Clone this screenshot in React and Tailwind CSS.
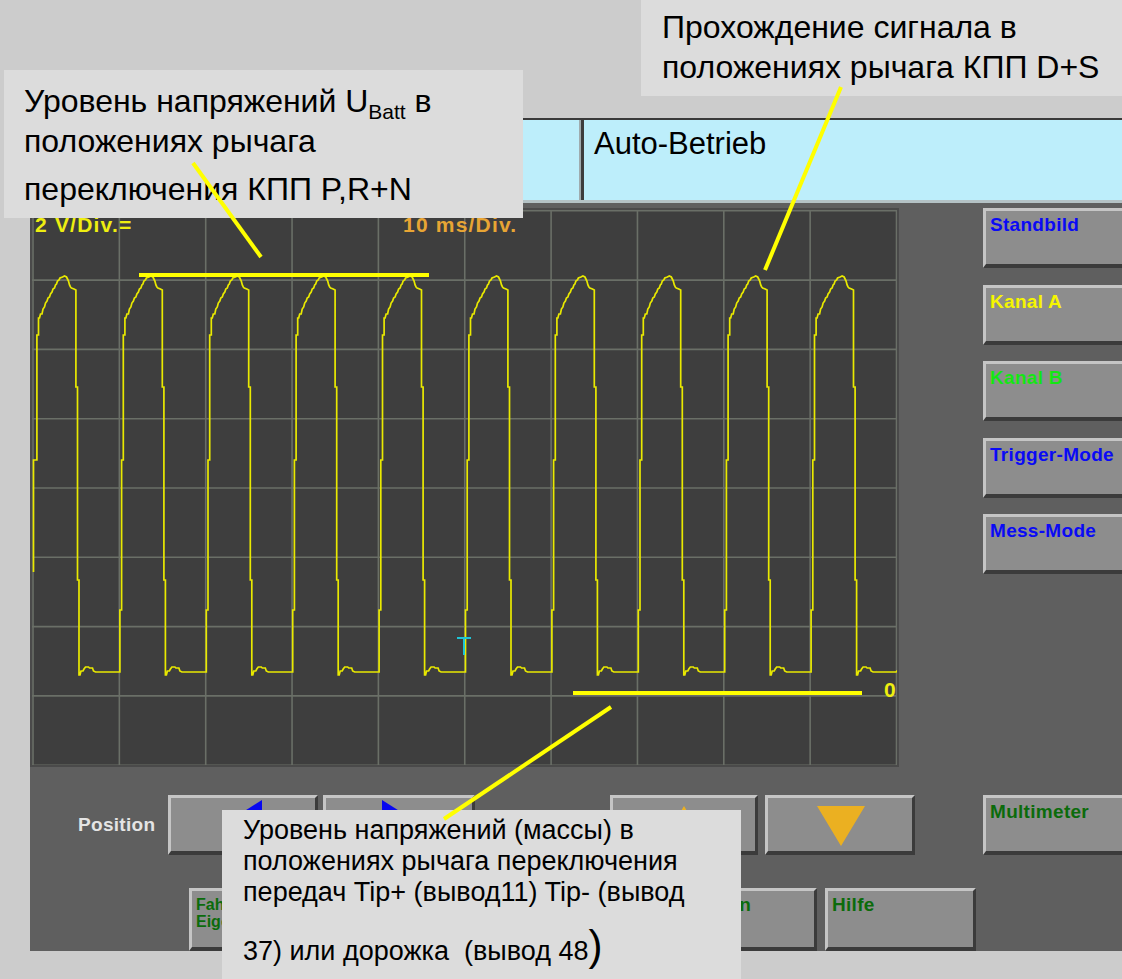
import React from 'react';

// one period of the recorded trace: [dx from rising edge, y on the page]
const PULSE = [
  [0, 672], [0, 610], [1.7, 610], [1.7, 460], [3.4, 460], [3.4, 335], [5, 335], [5, 318],
  [6, 318], [7, 314], [8.5, 314], [9.5, 309], [11, 307], [12, 303], [13.5, 301], [14.5, 298],
  [16, 297], [17, 294], [18.5, 292], [19.5, 289], [21, 288], [22, 285], [23, 284], [24, 281],
  [25.5, 280], [26.5, 278], [29, 277], [31, 276], [33, 277], [34, 279], [35, 281], [36, 285],
  [37, 287], [38, 288], [40.5, 289], [42.4, 290], [42.4, 387], [44, 387], [44, 580], [45.5, 580],
  [45.5, 675], [46.5, 675], [47.5, 671], [49.5, 671], [50.5, 669], [52, 667], [55, 667], [56, 668],
  [59, 668], [60, 671], [62, 672], [85, 672],
];

const SCOPE_X = 32;
const SCOPE_Y = 210;

function tracePath() {
  const pts = [];
  for (let k = 0; k < 10; k++) {
    const x0 = 33.5 + 86.4 * k;
    const shape = k === 0 ? [[0, 572], [0, 460], ...PULSE.slice(4)] : PULSE;
    shape.forEach(([dx, y]) => pts.push([x0 + dx - SCOPE_X, y - SCOPE_Y]));
  }
  pts.push([866, 670 - SCOPE_Y]);
  return 'M' + pts.map(([x, y]) => `${x.toFixed(1)} ${y}`).join(' L');
}

function Scope() {
  return (
    <div className="relative w-[869px] h-[559px] shrink-0 border-2 border-[#4a4a4a] bg-[#3e3e3e]">
      <svg className="absolute inset-0" width="865" height="555" viewBox="0 0 865 555">
        {Array.from({ length: 11 }, (_, i) => (
          <line key={'v' + i} x1={1 + 86.35 * i} y1="0" x2={1 + 86.35 * i} y2="555" stroke="#6a6f67" strokeWidth="1.6" />
        ))}
        {Array.from({ length: 9 }, (_, j) => (
          <line key={'h' + j} x1="0" y1={0.8 + 69.3 * j} x2="865" y2={0.8 + 69.3 * j} stroke="#6a6f67" strokeWidth="1.6" />
        ))}
        <path d={tracePath()} fill="none" stroke="#e9e900" strokeWidth="1.7" strokeLinejoin="miter" />
        {/* trigger mark */}
        <line x1="425" y1="428" x2="439" y2="428" stroke="#1ec4d6" strokeWidth="2" />
        <line x1="432" y1="428" x2="432" y2="445" stroke="#1ec4d6" strokeWidth="2" />
      </svg>
      <span className="absolute left-[3px] top-[3px] text-[21px] leading-[24px] font-bold tracking-[1.2px] text-[#eeee10]">2 V/Div.=</span>
      <span className="absolute left-[371px] top-[3px] text-[21px] leading-[24px] font-bold tracking-[1.2px] text-[#e8a534]">10 ms/Div.</span>
      <span className="absolute left-[852px] top-[468px] text-[21px] leading-[24px] font-bold text-[#eeee10]">0</span>
    </div>
  );
}

function Key({ className = '', label, tone = '', small = false, children }) {
  return (
    <div
      className={`relative shrink-0 border-t-[3px] border-l-[3px] border-r-[3px] border-b-[4px] border-t-[#c5c5c5] border-l-[#c5c5c5] border-r-[#3b3b3b] border-b-[#3b3b3b] bg-[#8d8d8d] ${className}`}
    >
      {label && (
        <div
          className={`pl-[4px] font-bold ${small ? 'pt-[5px] text-[16px] leading-[17px]' : 'pt-[3px] text-[19px] leading-[22px] tracking-[0.3px]'} ${tone}`}
        >
          {label}
        </div>
      )}
      {children}
    </div>
  );
}

function Arrow({ points, fill }) {
  return (
    <svg className="absolute left-0 top-0 overflow-visible" width="1" height="1">
      <polygon points={points} fill={fill} />
    </svg>
  );
}

function Screen() {
  return (
    <div className="ml-[30px] w-[1092px] h-[833px] shrink-0 flex flex-col bg-[#5f5f5f]">
      {/* title bar */}
      <div className="h-[85px] shrink-0 flex border-t-2 border-t-[#3a3a3a] border-b-[3px] border-b-[#b4c2c5] bg-[#bdeefb]">
        <div className="w-[551px] shrink-0 border-r-2 border-r-[#9fabae]" />
        <div className="flex-1 border-l-[3px] border-l-[#3d3d3d] pl-[10px] pt-[7px] text-[31px] leading-[34px] text-black">
          Auto-Betrieb
        </div>
      </div>

      <div className="flex-1 flex flex-col pt-[5px]">
        <div className="flex h-[559px]">
          <Scope />
          <div className="ml-[84px] flex flex-col gap-[16.5px]">
            <Key className="w-[150px] h-[60px]" label="Standbild" tone="text-[#0a0af5]" />
            <Key className="w-[150px] h-[60px]" label="Kanal A" tone="text-[#f5f500]" />
            <Key className="w-[150px] h-[60px]" label="Kanal B" tone="text-[#14e614]" />
            <Key className="w-[150px] h-[60px]" label="Trigger-Mode" tone="text-[#0a0af5]" />
            <Key className="w-[150px] h-[60px]" label="Mess-Mode" tone="text-[#0a0af5]" />
          </div>
        </div>

        <div className="mt-[28px] flex h-[60px]">
          <span className="w-[138px] shrink-0 self-center pl-[48px] text-[19px] font-bold tracking-[0.3px] text-[#e4e4e4]">
            Position
          </span>
          <Key className="w-[150px] h-full">
            <Arrow points="53,26 91,2 91,50" fill="#0808f0" />
          </Key>
          <Key className="ml-[5px] w-[152px] h-full">
            <Arrow points="56,2 56,50 94,26" fill="#0808f0" />
          </Key>
          <Key className="ml-[135px] w-[148px] h-full">
            <Arrow points="71,8 47,48 95,48" fill="#ebb021" />
          </Key>
          <Key className="ml-[7px] w-[150px] h-full">
            <Arrow points="49,8 97,8 73,48" fill="#ebb021" />
          </Key>
          <Key className="ml-[68px] w-[150px] h-full" label="Multimeter" tone="text-[#0b6b0b]" />
        </div>

        <div className="mt-[33px] flex h-[63px] pl-[159px] gap-[8px]">
          <Key
            className="w-[151px] h-full"
            small
            tone="text-[#0b6b0b]"
            label={<>Fahrzeug-<br />Eigendiagnose</>}
          />
          <Key className="w-[151px] h-full" />
          <Key className="w-[151px] h-full" />
          <Key className="w-[151px] h-full" label="Drucken" tone="text-[#0b6b0b]" />
          <Key className="w-[151px] h-full" label="Hilfe" tone="text-[#0b6b0b]" />
        </div>
      </div>
    </div>
  );
}

export default function App() {
  return (
    <div className="relative w-[1122px] h-[979px] overflow-hidden bg-[#cccccc] font-['Liberation_Sans',Arial,sans-serif] text-black">
      {/* slide heading, scrolled almost out of view */}
      <div className="h-[118px] shrink-0 overflow-hidden">
        <p className="-mt-[32px] pl-[40px] whitespace-nowrap text-[29px] leading-[32px]">
          Проверка прохождения сигнала переключения передач
        </p>
      </div>

      <Screen />

      {/* callouts */}
      <div className="absolute left-[4px] top-[70px] w-[519px] h-[148px] bg-[#dcdcdc] pl-[20px] pt-[11px] text-[32px] leading-[40px]">
        <p className="h-[40px] whitespace-nowrap">
          Уровень напряжений U<span className="text-[21px] leading-[0px] align-[-7px]">Batt</span> в
        </p>
        <p className="whitespace-nowrap">положениях рычага</p>
        <p className="mt-[8px] whitespace-nowrap">переключения КПП P,R+N</p>
      </div>

      <div className="absolute left-[641px] top-0 w-[481px] h-[96px] bg-[#dcdcdc] pl-[21px] pt-[7px] text-[32px] leading-[40px]">
        <p className="whitespace-nowrap">Прохождение сигнала в</p>
        <p className="whitespace-nowrap">положениях рычага КПП D+S</p>
      </div>

      <div className="absolute left-[222px] top-[810px] w-[519px] h-[169px] bg-[#dcdcdc] pl-[21px] pt-[5px] text-[27px] leading-[31px]">
        <p className="whitespace-nowrap">Уровень напряжений (массы) в</p>
        <p className="whitespace-nowrap">положениях рычага переключения</p>
        <p className="whitespace-nowrap">передач Tip+ (вывод11) Tip- (вывод</p>
        <p className="mt-[28px] h-[31px] whitespace-pre">
          37) или дорожка  (вывод 48<span className="text-[42px] leading-[0px]">)</span>
        </p>
      </div>

      {/* pointer lines */}
      <svg className="absolute inset-0 pointer-events-none" width="1122" height="979" viewBox="0 0 1122 979">
        <g stroke="#ffff00" strokeWidth="4">
          <line x1="193" y1="163" x2="261" y2="257" />
          <line x1="139" y1="275" x2="429" y2="275" />
          <line x1="841" y1="87" x2="765" y2="270" />
          <line x1="573" y1="693" x2="862" y2="693" />
          <line x1="611" y1="707" x2="444" y2="819" />
        </g>
      </svg>
    </div>
  );
}
